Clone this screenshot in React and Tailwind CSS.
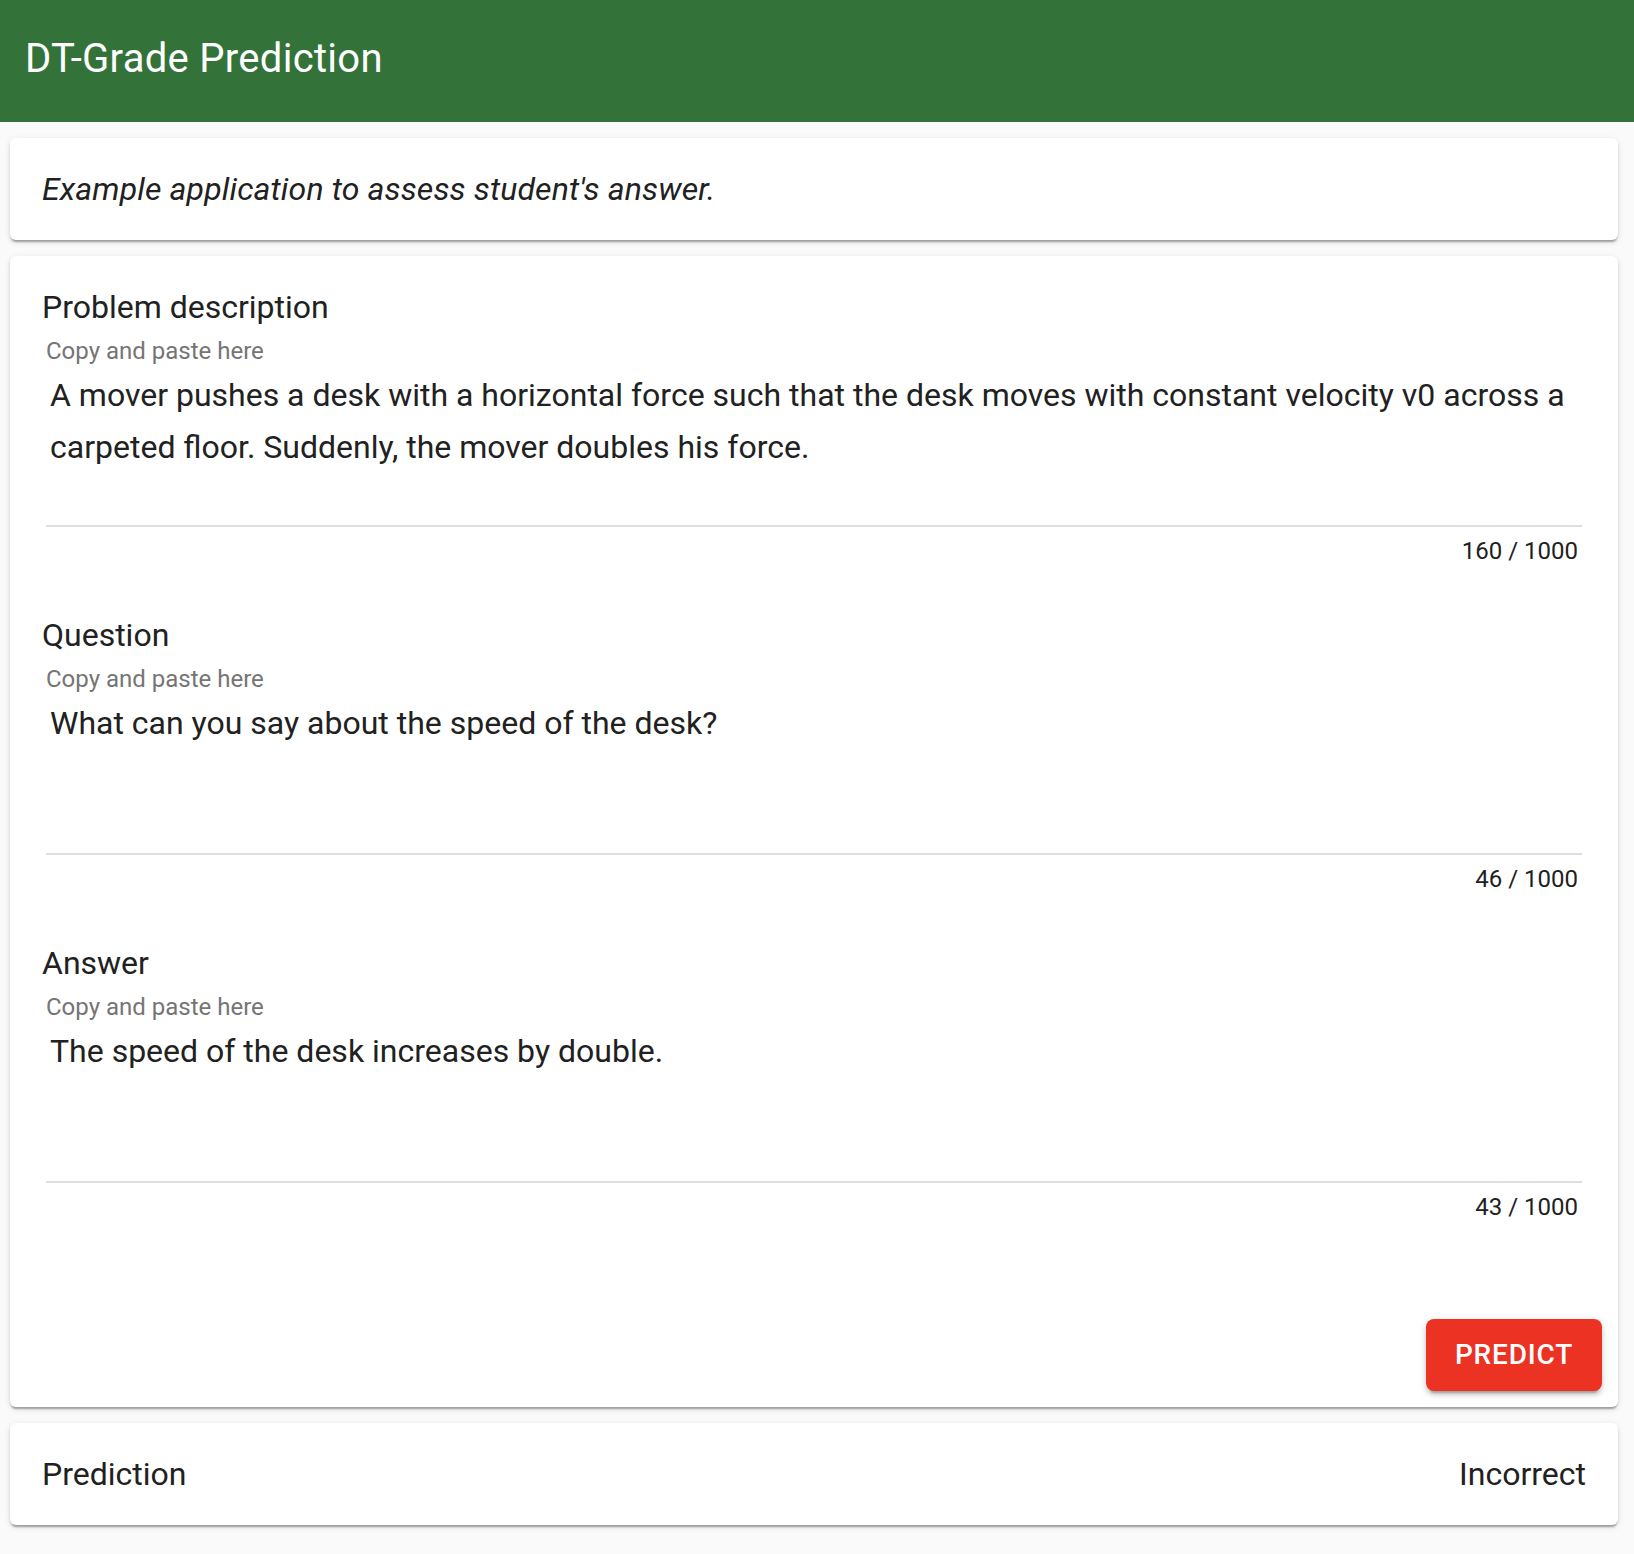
import React from "react";

function Field({ label, value, count }) {
  return (
    <div className="flex flex-col">
      <div className="text-[32px] leading-[38px] text-[#212121]">{label}</div>
      <div className="mt-[11px] ml-[4px] text-[24px] leading-[28px] text-[#757575]">
        Copy and paste here
      </div>
      <div className="mx-[4px] mt-[4px] border-b-2 border-[#dedede]">
        <textarea
          readOnly
          defaultValue={value}
          rows={3}
          className="block h-[156px] w-full resize-none overflow-hidden border-0 bg-transparent p-0 pl-[4px] pr-[4px] text-[32px] leading-[52px] text-[#212121] outline-none"
        />
      </div>
      <div className="mt-[10px] mr-[8px] text-right text-[24px] leading-[28px] text-[#212121]">
        {count} / 1000
      </div>
    </div>
  );
}

export default function App() {
  return (
    <div className="min-h-[1554px] bg-[#fafafa] font-[Roboto,sans-serif] text-[#212121]">
      <header className="flex h-[122px] items-center bg-[#33733a] pb-[6px] pl-[25px]">
        <h1 className="text-[40px] font-normal leading-[47px] tracking-[0.3px] text-white">DT-Grade Prediction</h1>
      </header>

      <main className="flex flex-col gap-[16px] pb-[28px] pl-[10px] pr-[16px] pt-[16px]">
        <section className="rounded-[6px] bg-white p-[32px] shadow-[0_4px_2px_-2px_rgba(0,0,0,0.2),0_2px_2px_0_rgba(0,0,0,0.14),0_2px_6px_0_rgba(0,0,0,0.12)]">
          <p className="text-[32px] italic leading-[38px] tracking-[0.14px]">
            Example application to assess student's answer.
          </p>
        </section>

        <section className="rounded-[6px] bg-white shadow-[0_4px_2px_-2px_rgba(0,0,0,0.2),0_2px_2px_0_rgba(0,0,0,0.14),0_2px_6px_0_rgba(0,0,0,0.12)]">
          <div className="flex flex-col gap-[51px] px-[32px] pt-[32px]">
            <Field
              label="Problem description"
              value="A mover pushes a desk with a horizontal force such that the desk moves with constant velocity v0 across a carpeted floor. Suddenly, the mover doubles his force."
              count={160}
            />
            <Field
              label="Question"
              value="What can you say about the speed of the desk?"
              count={46}
            />
            <Field
              label="Answer"
              value="The speed of the desk increases by double."
              count={43}
            />
          </div>
          <div className="flex justify-end px-[16px] pb-[16px] pt-[98px]">
            <button className="flex h-[72px] w-[176px] items-center justify-center rounded-[8px] bg-[#eb3223] text-[28px] font-medium uppercase tracking-[0.8px] text-white shadow-[0_6px_2px_-4px_rgba(0,0,0,0.2),0_4px_4px_0_rgba(0,0,0,0.14),0_2px_10px_0_rgba(0,0,0,0.12)]">
              Predict
            </button>
          </div>
        </section>

        <section className="flex items-center justify-between rounded-[6px] bg-white p-[32px] shadow-[0_4px_2px_-2px_rgba(0,0,0,0.2),0_2px_2px_0_rgba(0,0,0,0.14),0_2px_6px_0_rgba(0,0,0,0.12)]">
          <span className="text-[32px] leading-[38px]">Prediction</span>
          <span className="text-[32px] leading-[38px]">Incorrect</span>
        </section>
      </main>
    </div>
  );
}
